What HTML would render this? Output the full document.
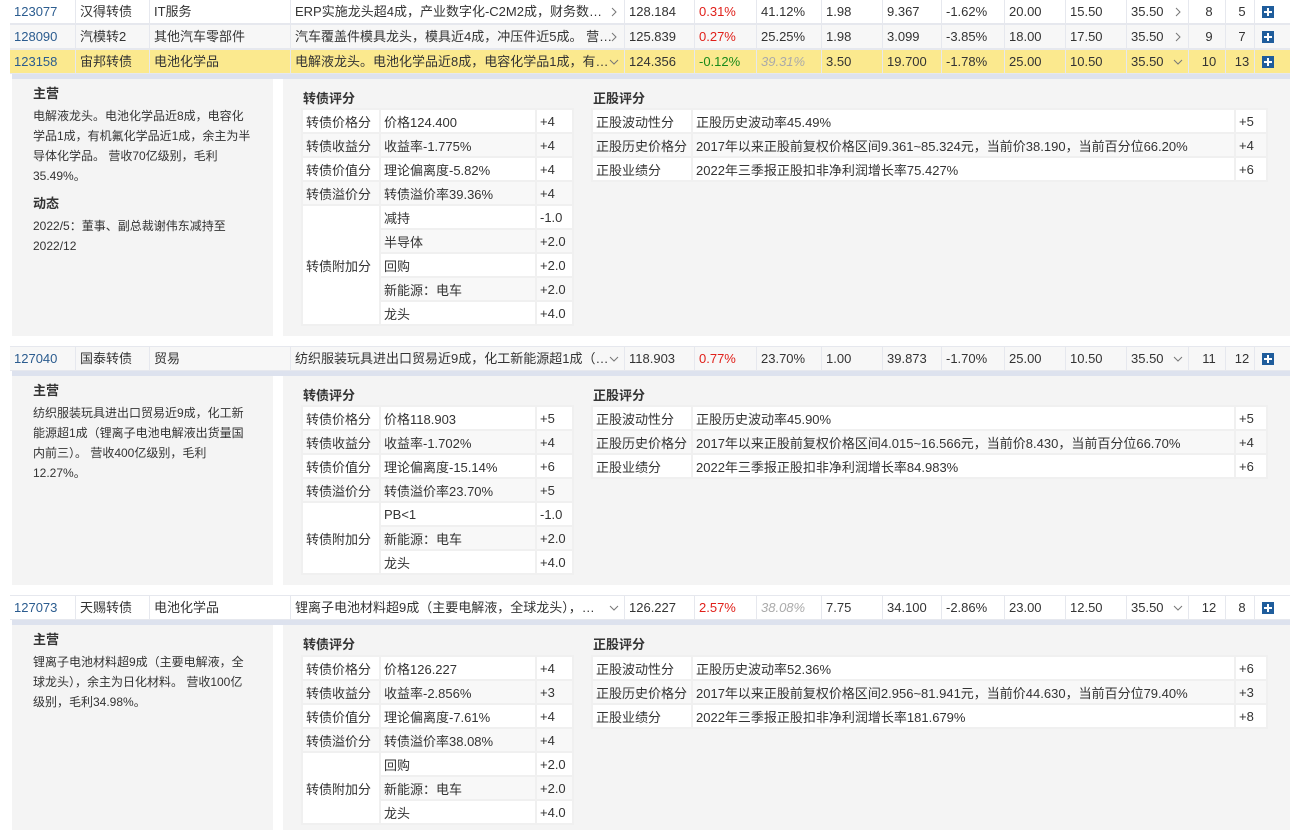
<!DOCTYPE html>
<html><head><meta charset="utf-8"><style>
*{box-sizing:border-box;margin:0;padding:0}
body{width:1294px;height:830px;overflow:hidden;background:#fff;font-family:"Liberation Sans","Noto Sans CJK SC",sans-serif;color:#333;position:relative}
.row{position:absolute;left:10px;width:1280px;height:25px;font-size:13px;border-top:1px solid #e6e8ee;border-bottom:1px solid #e6e8ee}
.row div{position:absolute;top:0;height:23px;line-height:23px;padding-left:4px;border-right:1px solid #e6e8ee;white-space:nowrap;overflow:hidden}
.code{color:#2b5c8f}
.red{color:#e0201a}.green{color:#1a8a1a}.gray{color:#aaa;font-style:italic}
.plus{position:absolute;width:12px;height:12px;background:#1f5d9c;top:6px}
.plus:before{content:"";position:absolute;left:5px;top:2px;width:2px;height:8px;background:#fff}
.plus:after{content:"";position:absolute;left:2px;top:5px;width:8px;height:2px;background:#fff}
.arr{position:absolute;right:5px;top:7px;width:10px;height:10px}
.detail{position:absolute;left:12px;width:1278px}
.strip{position:absolute;left:0;top:0;width:1278px;height:5px;background:#dde2ee}
.lp{position:absolute;left:0;top:0;width:261px;background:#f4f4f4;font-size:12px;line-height:20px;padding:10px 20px 0 21px}
.lp h4{font-size:13px;font-weight:bold;margin:0 0 2px}
.rp{position:absolute;left:271px;top:0;width:1007px;background:#f4f4f4}
.t{position:absolute;font-size:13px;font-weight:bold}
table{position:absolute;border-collapse:collapse;font-size:13px;background:#fff}
td{height:24px;border:2px solid #f0f0f0;padding:0 3px;white-space:nowrap}
tr:nth-child(even) td{background:#f8f8f8}
</style></head><body>
<svg width="0" height="0" style="position:absolute"><defs>
<symbol id="r" viewBox="0 0 10 10"><path d="M3 1 L7 5 L3 9" fill="none" stroke="#777" stroke-width="1"/></symbol>
<symbol id="d" viewBox="0 0 10 10"><path d="M1 3 L5 7 L9 3" fill="none" stroke="#777" stroke-width="1"/></symbol>
</defs></svg>

<div class="row" style="top:-1px;background:#fff">
<div class="code" style="left:0;width:66px">123077</div><div style="left:66px;width:74px">汉得转债</div><div style="left:140px;width:141px">IT服务</div>
<div style="left:281px;width:334px">ERP实施龙头超4成，产业数字化-C2M2成，财务数…<svg class="arr"><use href="#r"/></svg></div>
<div style="left:615px;width:70px">128.184</div><div class="red" style="left:685px;width:62px">0.31%</div><div style="left:747px;width:65px">41.12%</div><div style="left:812px;width:61px">1.98</div><div style="left:873px;width:59px">9.367</div><div style="left:932px;width:63px">-1.62%</div><div style="left:995px;width:61px">20.00</div><div style="left:1056px;width:61px">15.50</div><div style="left:1117px;width:62px">35.50<svg class="arr"><use href="#r"/></svg></div><div style="left:1179px;width:37px;text-align:center">8</div><div style="left:1216px;width:29px;text-align:center">5</div>
<span class="plus" style="left:1252px"></span></div>

<div class="row" style="top:24px;background:#f7f7f7">
<div class="code" style="left:0;width:66px">128090</div><div style="left:66px;width:74px">汽模转2</div><div style="left:140px;width:141px">其他汽车零部件</div>
<div style="left:281px;width:334px">汽车覆盖件模具龙头，模具近4成，冲压件近5成。 营…<svg class="arr"><use href="#r"/></svg></div>
<div style="left:615px;width:70px">125.839</div><div class="red" style="left:685px;width:62px">0.27%</div><div style="left:747px;width:65px">25.25%</div><div style="left:812px;width:61px">1.98</div><div style="left:873px;width:59px">3.099</div><div style="left:932px;width:63px">-3.85%</div><div style="left:995px;width:61px">18.00</div><div style="left:1056px;width:61px">17.50</div><div style="left:1117px;width:62px">35.50<svg class="arr"><use href="#r"/></svg></div><div style="left:1179px;width:37px;text-align:center">9</div><div style="left:1216px;width:29px;text-align:center">7</div>
<span class="plus" style="left:1252px"></span></div>

<div class="row" style="top:49px;background:#fbe98e">
<div class="code" style="left:0;width:66px">123158</div><div style="left:66px;width:74px">宙邦转债</div><div style="left:140px;width:141px">电池化学品</div>
<div style="left:281px;width:334px">电解液龙头。电池化学品近8成，电容化学品1成，有…<svg class="arr"><use href="#d"/></svg></div>
<div style="left:615px;width:70px">124.356</div><div class="green" style="left:685px;width:62px">-0.12%</div><div class="gray" style="left:747px;width:65px">39.31%</div><div style="left:812px;width:61px">3.50</div><div style="left:873px;width:59px">19.700</div><div style="left:932px;width:63px">-1.78%</div><div style="left:995px;width:61px">25.00</div><div style="left:1056px;width:61px">10.50</div><div style="left:1117px;width:62px">35.50<svg class="arr"><use href="#d"/></svg></div><div style="left:1179px;width:37px;text-align:center">10</div><div style="left:1216px;width:29px;text-align:center">13</div>
<span class="plus" style="left:1252px"></span></div>

<div class="detail" style="top:74px;height:262px">
<div class="lp" style="height:262px"><h4>主营</h4>电解液龙头。电池化学品近8成，电容化学品1成，有机氟化学品近1成，余主为半导体化学品。 营收70亿级别，毛利35.49%。<h4 style="margin-top:8px">动态</h4>2022/5：董事、副总裁谢伟东减持至2022/12</div>
<div class="rp" style="height:262px"></div>
<div class="strip"></div>
<div class="t" style="left:291px;top:14px">转债评分</div>
<div class="t" style="left:581px;top:14px">正股评分</div>
<table style="left:289px;top:34px;width:273px">
<tr><td style="width:78px">转债价格分</td><td style="width:156px">价格124.400</td><td>+4</td></tr>
<tr><td>转债收益分</td><td>收益率-1.775%</td><td>+4</td></tr>
<tr><td>转债价值分</td><td>理论偏离度-5.82%</td><td>+4</td></tr>
<tr><td>转债溢价分</td><td>转债溢价率39.36%</td><td>+4</td></tr>
<tr><td rowspan="5" style="background:#fff">转债附加分</td><td>减持</td><td>-1.0</td></tr>
<tr><td>半导体</td><td>+2.0</td></tr>
<tr><td>回购</td><td>+2.0</td></tr>
<tr><td>新能源：电车</td><td>+2.0</td></tr>
<tr><td>龙头</td><td>+4.0</td></tr>
</table>
<table style="left:579px;top:34px;width:677px">
<tr><td style="width:100px">正股波动性分</td><td>正股历史波动率45.49%</td><td style="width:32px">+5</td></tr>
<tr><td>正股历史价格分</td><td>2017年以来正股前复权价格区间9.361~85.324元，当前价38.190，当前百分位66.20%</td><td>+4</td></tr>
<tr><td>正股业绩分</td><td>2022年三季报正股扣非净利润增长率75.427%</td><td>+6</td></tr>
</table>
</div>

<div class="row" style="top:346px;background:#f7f7f7">
<div class="code" style="left:0;width:66px">127040</div><div style="left:66px;width:74px">国泰转债</div><div style="left:140px;width:141px">贸易</div>
<div style="left:281px;width:334px">纺织服装玩具进出口贸易近9成，化工新能源超1成（…<svg class="arr"><use href="#d"/></svg></div>
<div style="left:615px;width:70px">118.903</div><div class="red" style="left:685px;width:62px">0.77%</div><div style="left:747px;width:65px">23.70%</div><div style="left:812px;width:61px">1.00</div><div style="left:873px;width:59px">39.873</div><div style="left:932px;width:63px">-1.70%</div><div style="left:995px;width:61px">25.00</div><div style="left:1056px;width:61px">10.50</div><div style="left:1117px;width:62px">35.50<svg class="arr"><use href="#d"/></svg></div><div style="left:1179px;width:37px;text-align:center">11</div><div style="left:1216px;width:29px;text-align:center">12</div>
<span class="plus" style="left:1252px"></span></div>

<div class="detail" style="top:371px;height:214px">
<div class="lp" style="height:214px"><h4>主营</h4>纺织服装玩具进出口贸易近9成，化工新能源超1成（锂离子电池电解液出货量国内前三）。 营收400亿级别，毛利12.27%。</div>
<div class="rp" style="height:214px"></div>
<div class="strip"></div>
<div class="t" style="left:291px;top:14px">转债评分</div>
<div class="t" style="left:581px;top:14px">正股评分</div>
<table style="left:289px;top:34px;width:273px">
<tr><td style="width:78px">转债价格分</td><td style="width:156px">价格118.903</td><td>+5</td></tr>
<tr><td>转债收益分</td><td>收益率-1.702%</td><td>+4</td></tr>
<tr><td>转债价值分</td><td>理论偏离度-15.14%</td><td>+6</td></tr>
<tr><td>转债溢价分</td><td>转债溢价率23.70%</td><td>+5</td></tr>
<tr><td rowspan="3" style="background:#fff">转债附加分</td><td>PB&lt;1</td><td>-1.0</td></tr>
<tr><td>新能源：电车</td><td>+2.0</td></tr>
<tr><td>龙头</td><td>+4.0</td></tr>
</table>
<table style="left:579px;top:34px;width:677px">
<tr><td style="width:100px">正股波动性分</td><td>正股历史波动率45.90%</td><td style="width:32px">+5</td></tr>
<tr><td>正股历史价格分</td><td>2017年以来正股前复权价格区间4.015~16.566元，当前价8.430，当前百分位66.70%</td><td>+4</td></tr>
<tr><td>正股业绩分</td><td>2022年三季报正股扣非净利润增长率84.983%</td><td>+6</td></tr>
</table>
</div>

<div class="row" style="top:595px;background:#fff">
<div class="code" style="left:0;width:66px">127073</div><div style="left:66px;width:74px">天赐转债</div><div style="left:140px;width:141px">电池化学品</div>
<div style="left:281px;width:334px">锂离子电池材料超9成（主要电解液，全球龙头），…<svg class="arr"><use href="#d"/></svg></div>
<div style="left:615px;width:70px">126.227</div><div class="red" style="left:685px;width:62px">2.57%</div><div class="gray" style="left:747px;width:65px">38.08%</div><div style="left:812px;width:61px">7.75</div><div style="left:873px;width:59px">34.100</div><div style="left:932px;width:63px">-2.86%</div><div style="left:995px;width:61px">23.00</div><div style="left:1056px;width:61px">12.50</div><div style="left:1117px;width:62px">35.50<svg class="arr"><use href="#d"/></svg></div><div style="left:1179px;width:37px;text-align:center">12</div><div style="left:1216px;width:29px;text-align:center">8</div>
<span class="plus" style="left:1252px"></span></div>

<div class="detail" style="top:620px;height:210px">
<div class="lp" style="height:210px"><h4>主营</h4>锂离子电池材料超9成（主要电解液，全球龙头），余主为日化材料。 营收100亿级别，毛利34.98%。</div>
<div class="rp" style="height:210px"></div>
<div class="strip"></div>
<div class="t" style="left:291px;top:14px">转债评分</div>
<div class="t" style="left:581px;top:14px">正股评分</div>
<table style="left:289px;top:35px;width:273px">
<tr><td style="width:78px">转债价格分</td><td style="width:156px">价格126.227</td><td>+4</td></tr>
<tr><td>转债收益分</td><td>收益率-2.856%</td><td>+3</td></tr>
<tr><td>转债价值分</td><td>理论偏离度-7.61%</td><td>+4</td></tr>
<tr><td>转债溢价分</td><td>转债溢价率38.08%</td><td>+4</td></tr>
<tr><td rowspan="3" style="background:#fff">转债附加分</td><td>回购</td><td>+2.0</td></tr>
<tr><td>新能源：电车</td><td>+2.0</td></tr>
<tr><td>龙头</td><td>+4.0</td></tr>
</table>
<table style="left:579px;top:35px;width:677px">
<tr><td style="width:100px">正股波动性分</td><td>正股历史波动率52.36%</td><td style="width:32px">+6</td></tr>
<tr><td>正股历史价格分</td><td>2017年以来正股前复权价格区间2.956~81.941元，当前价44.630，当前百分位79.40%</td><td>+3</td></tr>
<tr><td>正股业绩分</td><td>2022年三季报正股扣非净利润增长率181.679%</td><td>+8</td></tr>
</table>
</div>
</body></html>
